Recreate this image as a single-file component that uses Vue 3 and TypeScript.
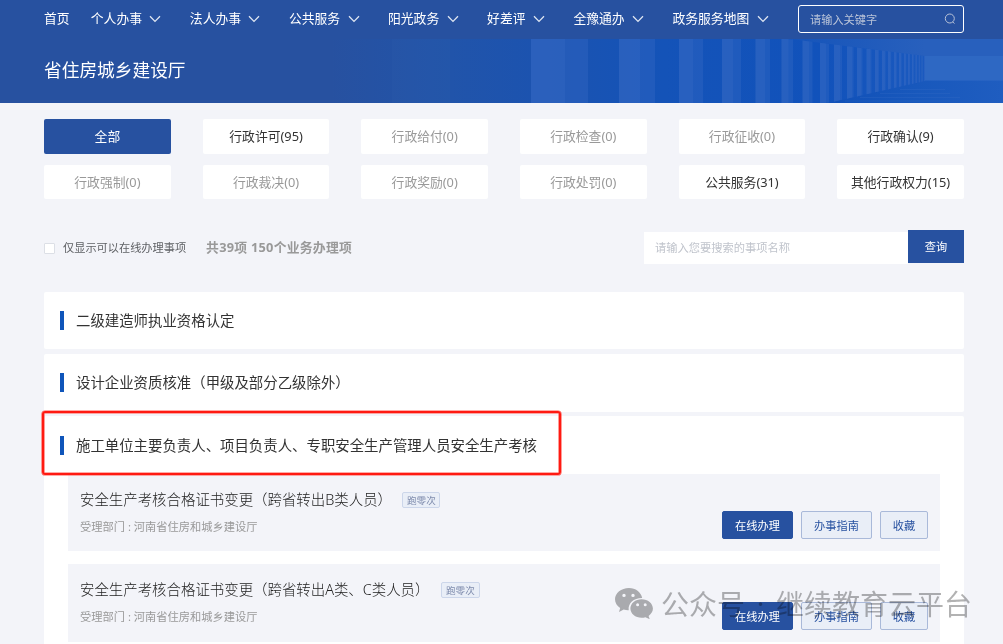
<script setup lang="ts">
interface NavItem { label: string; menu: boolean }
interface Category { label: string; count?: number; active?: boolean }
interface Service { name: string; dept: string }

const nav: NavItem[] = [
  { label: '首页', menu: false },
  { label: '个人办事', menu: true },
  { label: '法人办事', menu: true },
  { label: '公共服务', menu: true },
  { label: '阳光政务', menu: true },
  { label: '好差评', menu: true },
  { label: '全豫通办', menu: true },
  { label: '政务服务地图', menu: true },
]

const categories: Category[] = [
  { label: '全部', active: true },
  { label: '行政许可', count: 95 },
  { label: '行政给付', count: 0 },
  { label: '行政检查', count: 0 },
  { label: '行政征收', count: 0 },
  { label: '行政确认', count: 9 },
  { label: '行政强制', count: 0 },
  { label: '行政裁决', count: 0 },
  { label: '行政奖励', count: 0 },
  { label: '行政处罚', count: 0 },
  { label: '公共服务', count: 31 },
  { label: '其他行政权力', count: 15 },
]

const services: Service[] = [
  { name: '安全生产考核合格证书变更（跨省转出B类人员）', dept: '河南省住房和城乡建设厅' },
  { name: '安全生产考核合格证书变更（跨省转出A类、C类人员）', dept: '河南省住房和城乡建设厅' },
]

// Colonnade in the banner: [left, lit face width, full width], receding to the right
const columns: [number, number, number][] = [
  [531, 34, 57], [619, 21, 36], [679, 14, 24], [722, 11, 19], [755.5, 9.5, 14.5],
  [781.5, 7, 11.5], [802.5, 6.5, 10], [820, 6, 9], [834, 6, 8], [847, 5, 6.5],
  [857, 4.2, 5.5], [866.5, 3.8, 5], [875, 3, 4], [882, 2.8, 3.6], [888, 2.5, 3.2],
  [894, 2.2, 2.8], [899, 2, 2.6], [904, 1.8, 2.2], [908, 1.6, 2], [912, 1.4, 1.8],
  [915.5, 1.2, 1.5], [918.7, 1.1, 1.3], [921.5, 1, 1.2], [924, 0.8, 1],
]
const topAt = (x: number): number => (x < 790 ? 0 : ((x - 790) / 135) * 17)
const bottomAt = (x: number): number => (x < 828 ? 64 : 64 - ((x - 828) / 97) * 22)
const columnPoints = (x: number, w: number): string =>
  `${x},${topAt(x)} ${x + w},${topAt(x + w)} ${x + w},${bottomAt(x + w)} ${x},${bottomAt(x)}`
</script>

<template>
  <div class="page">
    <header class="topbar">
      <nav class="nav">
        <a v-for="item in nav" :key="item.label" class="nav-item" :class="{ plain: !item.menu }">
          <span>{{ item.label }}</span>
          <svg v-if="item.menu" class="chevron" viewBox="0 0 12 8"><path d="M1 1.3 6 6.4 11 1.3" /></svg>
        </a>
      </nav>
      <div class="site-search">
        <span>请输入关键字</span>
        <svg class="magnifier" viewBox="0 0 12 12"><circle cx="5.8" cy="5.5" r="4.5" /><path d="M8.8 8.9 10.4 10.6" /></svg>
      </div>
    </header>

    <section class="banner">
      <svg class="banner-art" viewBox="0 0 1003 64" preserveAspectRatio="none">
        <defs>
          <linearGradient id="sky" x1="0" x2="1" y1="0" y2="0">
            <stop offset="0" stop-color="#2751a0" />
            <stop offset=".33" stop-color="#2751a0" />
            <stop offset=".45" stop-color="#2154aa" />
            <stop offset=".53" stop-color="#1c53af" />
            <stop offset=".66" stop-color="#1453b8" />
            <stop offset=".82" stop-color="#1152bb" />
            <stop offset="1" stop-color="#225fc2" />
          </linearGradient>
          <linearGradient id="ceiling" gradientUnits="userSpaceOnUse" x1="790" x2="925" y1="0" y2="0">
            <stop offset="0" stop-color="#1554ba" />
            <stop offset="1" stop-color="#2860bd" />
          </linearGradient>
          <linearGradient id="floor" gradientUnits="userSpaceOnUse" x1="828" x2="1003" y1="0" y2="0">
            <stop offset="0" stop-color="#1050b8" />
            <stop offset=".5" stop-color="#1858bc" />
            <stop offset="1" stop-color="#1f5dc0" />
          </linearGradient>
        </defs>
        <rect width="1003" height="64" fill="url(#sky)" />
        <rect x="392" width="58" height="64" fill="#2c5bad" opacity=".25" />
        <polygon points="790,0 1003,0 1003,17 925,17" fill="url(#ceiling)" />
        <polygon points="828,64 925,42 1003,42 1003,64" fill="url(#floor)" />
        <path class="floor-lines" d="M860 58.500H960M845 62H950M880 54.500H950M900 50.500H945" />
        <g class="columns">
          <template v-for="[x, lit, full] in columns" :key="x">
            <polygon :points="columnPoints(x, full)" />
            <polygon :points="columnPoints(x, lit)" />
          </template>
        </g>
        <rect x="925" y="17" width="78" height="24.500" fill="#2e68c3" />
      </svg>
      <h1>省住房城乡建设厅</h1>
    </section>

    <main class="content">
      <div class="categories">
        <button
          v-for="c in categories"
          :key="c.label"
          class="category"
          :class="{ active: c.active, empty: c.count === 0 }"
        >{{ c.label }}<template v-if="c.count !== undefined">({{ c.count }})</template></button>
      </div>

      <div class="toolbar">
        <i class="checkbox"></i>
        <span class="check-label">仅显示可以在线办理事项</span>
        <strong>共39项 150个业务办理项</strong>
        <div class="item-search">
          <div class="item-input">请输入您要搜索的事项名称</div>
          <button>查询</button>
        </div>
      </div>

      <div class="cards">
        <section class="card"><h2><span>二级建造师执业资格认定</span></h2></section>
        <section class="card second"><h2><span>设计企业资质核准（甲级及部分乙级除外）</span></h2></section>
        <section class="card open">
          <div class="highlight"></div>
          <h2><span>施工单位主要负责人、项目负责人、专职安全生产管理人员安全生产考核</span></h2>
          <article v-for="s in services" :key="s.name" class="service">
            <div class="service-title"><h3>{{ s.name }}</h3><span class="tag">跑零次</span></div>
            <p>受理部门 : {{ s.dept }}</p>
            <div class="actions">
              <button class="primary">在线办理</button>
              <button>办事指南</button>
              <button>收藏</button>
            </div>
          </article>
        </section>
      </div>
    </main>

    <div class="watermark">
      <svg viewBox="0 0 38 32">
        <path fill-rule="evenodd" d="M14 1C6.200 1 0 6 0 12.300c0 3.600 2 6.700 5.200 8.800L4 25l4.700-2.400c1.900.6 3.400.8 5 .7-.9-7 5-12.400 13.500-12.300C26 5 20.500 1 14 1ZM9 6.700a1.700 1.700 0 1 1 0 3.400a1.700 1.700 0 0 1 0-3.400ZM18 6.700a1.700 1.700 0 1 1 0 3.400a1.700 1.700 0 0 1 0-3.400Z" />
        <path fill-rule="evenodd" d="M26.600 12.200c-6.300 0-11.200 4.200-11.200 9.300s4.900 9.300 11.200 9.300c1.300 0 2.600-.2 3.800-.6l4.300 2-1.100-3.300c2.700-1.900 4.300-4.400 4.300-7.400 0-5.100-5-9.300-11.300-9.300ZM22.600 16.300a1.500 1.500 0 1 1 0 3a1.500 1.500 0 0 1 0-3ZM30.200 16.300a1.500 1.500 0 1 1 0 3a1.500 1.500 0 0 1 0-3Z" />
      </svg>
      <span>公众号</span><b>·</b><span>继续教育云平台</span>
    </div>
  </div>
</template>

<style>
body { margin: 0; background: #f3f4f9; overflow: hidden; }
</style>

<style scoped>
.page {
  position: relative;
  width: 1003px;
  height: 644px;
  overflow: hidden;
  background: #f3f4f9;
  color: #333;
  font-family: "Noto Sans", "Noto Sans CJK SC", sans-serif;
  font-size: 12.8px;
}
h1, h2, h3, p { margin: 0; font-weight: 400; }
button { box-sizing: border-box; margin: 0; padding: 0; border: 0; font: inherit; color: inherit; white-space: nowrap; }

.topbar {
  box-sizing: border-box;
  display: flex;
  justify-content: space-between;
  height: 39px;
  padding: 0 39px 0 44px;
  background: #2751a0;
  color: #fff;
}
.nav { display: flex; height: 36px; }
.nav-item { display: flex; align-items: center; margin-right: 28.5px; white-space: nowrap; }
.nav-item.plain { margin-right: 21.2px; }
.nav-item span { margin-bottom: 2px; }
.chevron { width: 12px; height: 8px; margin: 2px 0 0 7.4px; fill: none; stroke: #dfe6f2; stroke-width: 1.3; }
.site-search {
  box-sizing: border-box;
  display: flex;
  flex: none;
  align-items: center;
  justify-content: space-between;
  width: 166px;
  height: 28px;
  margin-top: 5px;
  padding: 0 7px 0 11px;
  border: 1px solid #fff;
  border-radius: 3px;
  color: #b9c3d8;
  font-size: 11.2px;
}
.magnifier { width: 12px; height: 12px; fill: none; stroke: #b9c3d8; stroke-width: 1; }

.banner { position: relative; height: 64px; }
.banner-art { position: absolute; inset: 0; width: 100%; height: 100%; }
.floor-lines { fill: none; stroke: #3c70c9; stroke-width: 1; opacity: .25; }
.columns { fill: #3469c2; fill-opacity: .4; }
.banner h1 { position: relative; padding-left: 44px; color: #fff; font-size: 17.7px; line-height: 62px; }

.content { padding: 16px 39px 0 44px; }
.categories { display: grid; grid-template-columns: repeat(6, 1fr); gap: 11px 31.8px; grid-template-rows: 35px 34px; }
.category { padding: 0 0 2px; border-radius: 2px; background: #fff; }
.category.active { background: #2751a0; color: #fff; }
.category.empty { color: #999; }

.toolbar { display: flex; align-items: center; height: 34px; margin-top: 31px; }
.checkbox { box-sizing: border-box; width: 11px; height: 11px; margin-top: 2px; border: 1px solid #dcdfe6; border-radius: 1px; background: #fff; }
.check-label { margin: 0 20px 1px 8px; color: #606266; font-size: 11.2px; }
.toolbar strong { margin-bottom: 2px; color: #999; letter-spacing: .26px; }
.item-search { display: flex; height: 34px; margin-left: auto; }
.item-input { box-sizing: border-box; width: 264px; height: 32px; margin-top: 2px; padding-left: 11px; background: #fff; color: #c0c4cc; font-size: 11.25px; line-height: 31px; }
.item-search button { width: 56px; height: 33px; padding-bottom: 1px; background: #2751a0; color: #fff; font-size: 11.2px; }

.cards { display: grid; grid-template-rows: 57px 58px 240px; row-gap: 4.5px; margin-top: 28px; }
.card { position: relative; border-radius: 2px; background: #fff; }
.card h2 { display: flex; align-items: center; height: 57px; padding-left: 16px; font-size: 14.42px; white-space: nowrap; }
.card h2::before { content: ""; width: 4px; height: 19px; margin-right: 12px; background: #0f55ba; }
.card h2 span { margin-bottom: 2px; }
.card.second h2 span { margin-bottom: 1px; }
.card.open h2 { height: 58px; }
.highlight { position: absolute; z-index: 2; top: -5.5px; left: -2.5px; box-sizing: border-box; width: 519px; height: 64px; border: 2px solid #ff1a12; border-radius: 3px; box-shadow: 0 0 0 .6px #ff5a52, inset 0 0 0 .6px #ff5a52; }
.service { position: relative; box-sizing: border-box; height: 77px; margin: 0 24px 13px; padding: 13px 12px 0; background: #f3f4f9; }
.service + .service { height: 78px; }
.service-title { display: flex; align-items: center; height: 23px; }
.service h3 { color: #222; font-size: 14.43px; font-weight: 300; white-space: nowrap; }
.tag { box-sizing: border-box; width: 38px; height: 16px; margin: 3px 0 0 10.4px; border: 1px solid #ccd6ea; border-radius: 2px; background: #e9eef7; color: #7f8cad; font-size: 9.6px; line-height: 15px; text-align: center; }
.service + .service .tag { width: 39px; margin-left: 11.4px; }
.service p { margin-top: 8px; color: #999; font-size: 11.25px; line-height: 18px; }
.actions { position: absolute; top: 37px; right: 12px; display: flex; gap: 8px; }
.service + .service .actions { top: 38px; }
.actions button { width: 71px; height: 28px; border: 1px solid #a9b9d9; border-radius: 2px; background: #e9eef7; color: #2751a0; font-size: 11.2px; }
.actions .primary { border-color: #2751a0; background: #2751a0; color: #fff; }
.actions button:last-child { width: 48px; }

.watermark {
  position: absolute;
  left: 615px;
  top: 583px;
  display: flex;
  align-items: center;
  height: 40px;
  color: #777;
  font-size: 28px;
  opacity: .57;
  mix-blend-mode: multiply;
  white-space: nowrap;
}
.watermark svg { width: 38px; height: 32px; margin-right: 8px; fill: #777; }
.watermark b { width: 31px; text-align: center; font-weight: 400; }
</style>
